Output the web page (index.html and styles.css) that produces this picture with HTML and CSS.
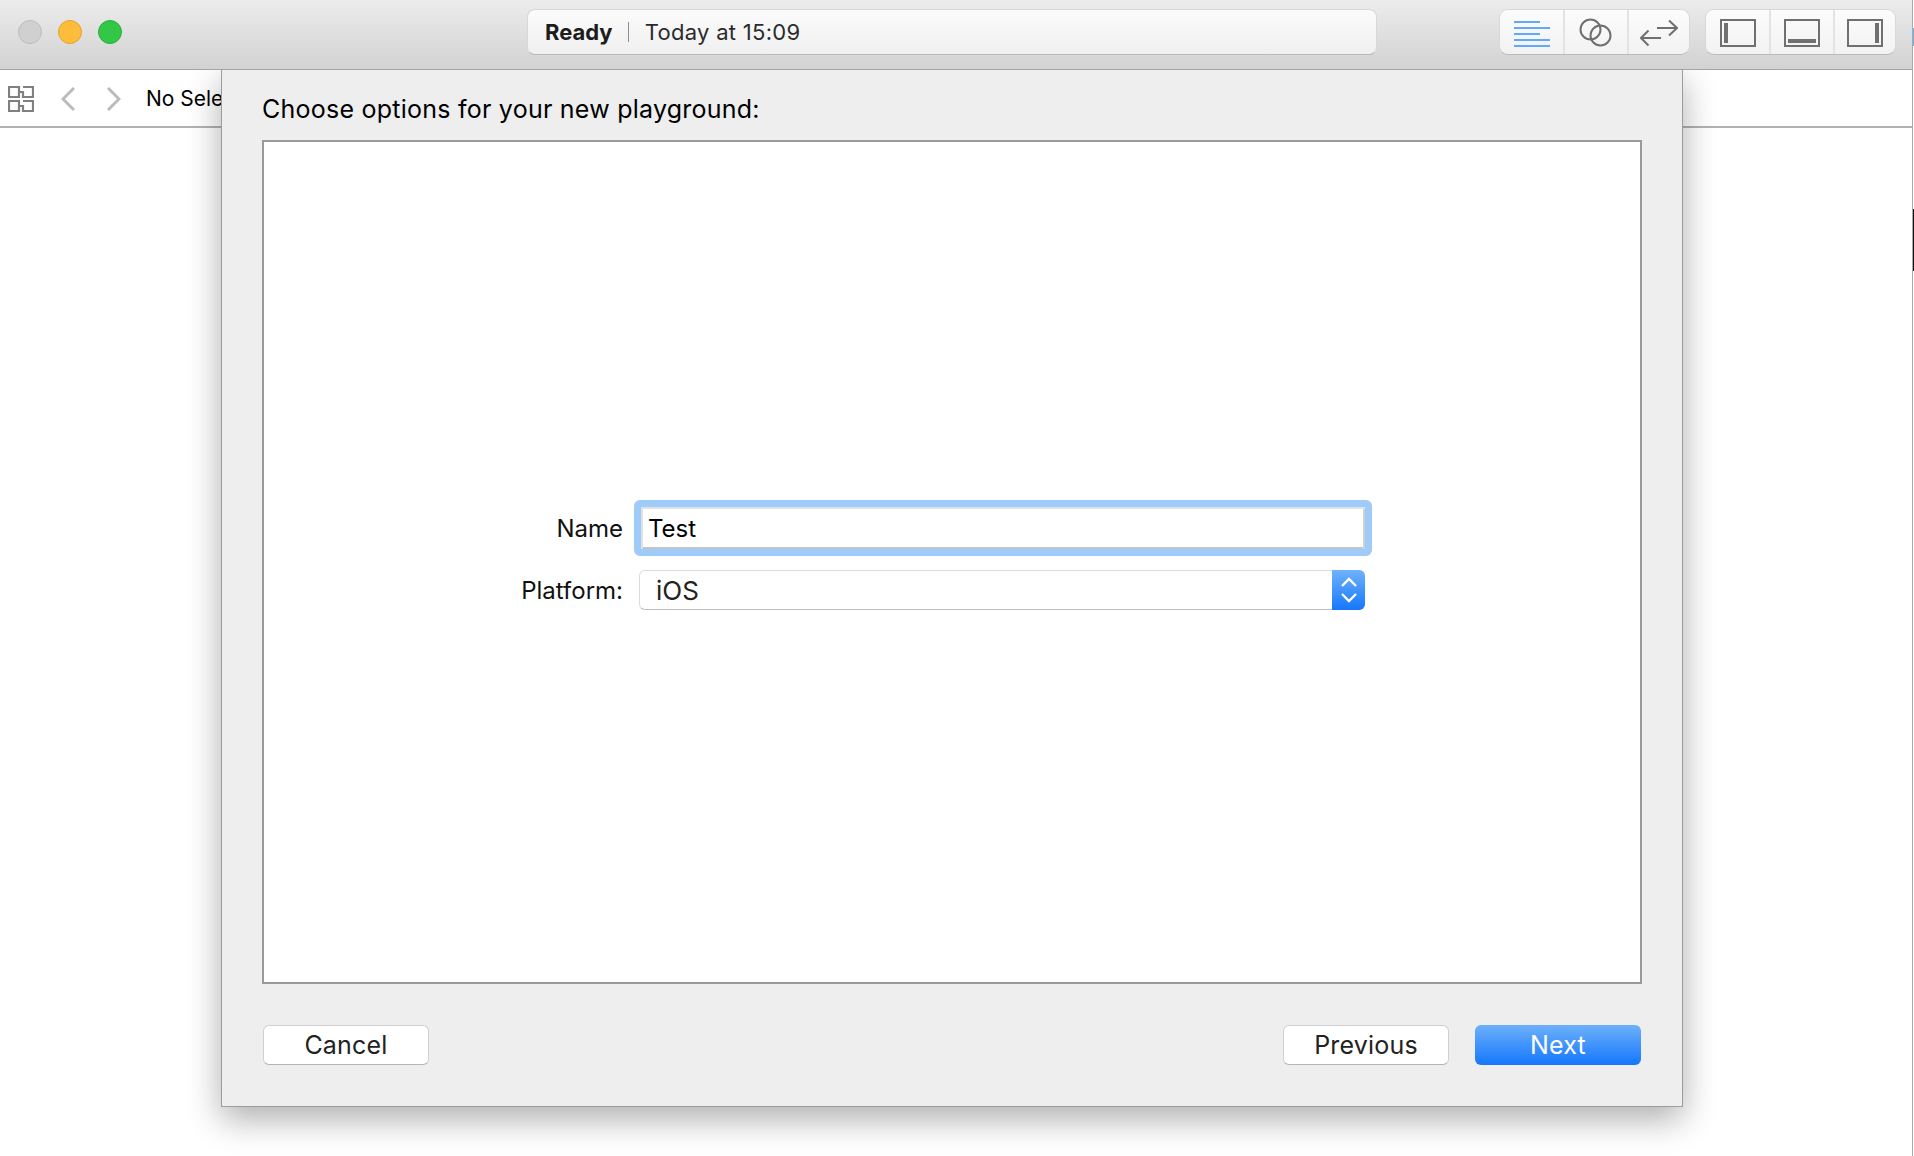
FILE: index.html
```html
<!DOCTYPE html>
<html lang="en">
<head>
<meta charset="utf-8">
<title>Choose options for your new playground</title>
<link rel="stylesheet" href="styles.css">
</head>
<body>
<div class="screen">
  <div class="window">
    <header class="titlebar">
      <div class="lights">
        <span class="light light-off"></span>
        <span class="light light-min"></span>
        <span class="light light-max"></span>
      </div>
      <div class="status">
        <strong class="status-main">Ready</strong>
        <span class="status-sep"></span>
        <span class="status-time">Today at 15:09</span>
      </div>
      <div class="toolgroup">
        <span class="tool">
          <svg width="36" height="28" viewBox="0 -2 36 28" fill="none" stroke="#62a8fb" stroke-width="2"><path d="M0 1H26M0 7H36M0 13H26M0 19H36M0 25H36"/></svg>
        </span>
        <span class="tool">
          <svg width="34" height="30" viewBox="0 0 34 30" fill="none" stroke="#707070" stroke-width="2"><circle cx="11.5" cy="11.5" r="10"/><circle cx="21.5" cy="17.5" r="10"/></svg>
        </span>
        <span class="tool">
          <svg width="38" height="28" viewBox="0 0 38 28" fill="none" stroke="#707070" stroke-width="2"><path d="M17 9H37M29 1.5L37 9L29 16.5M21 19H1M8.5 11.5L1 19L8.5 26.5"/></svg>
        </span>
      </div>
      <div class="toolgroup">
        <span class="tool">
          <svg width="36" height="28" viewBox="0 0 36 28"><rect x="1" y="1" width="34" height="26" fill="none" stroke="#707070" stroke-width="2"/><rect x="4" y="4" width="4" height="20" fill="#707070"/></svg>
        </span>
        <span class="tool">
          <svg width="36" height="28" viewBox="0 0 36 28"><rect x="1" y="1" width="34" height="26" fill="none" stroke="#707070" stroke-width="2"/><rect x="4" y="20" width="28" height="4" fill="#707070"/></svg>
        </span>
        <span class="tool">
          <svg width="36" height="28" viewBox="0 0 36 28"><rect x="1" y="1" width="34" height="26" fill="none" stroke="#707070" stroke-width="2"/><rect x="28" y="4" width="4" height="20" fill="#707070"/></svg>
        </span>
      </div>
    </header>
    <nav class="jumpbar">
      <svg class="grid-icon" width="26" height="26" viewBox="0 0 26 26" fill="none" stroke="#808080" stroke-width="2.2"><path d="M1 1H11V11H1ZM15 1H25V11H15V6H11M1 15H11V25H1ZM15 15H25V25H15V20H11"/></svg>
      <svg class="chevron" width="14" height="24" viewBox="0 0 14 24" fill="none" stroke="#bbbbbb" stroke-width="3"><path d="M13 1L2 12L13 23"/></svg>
      <svg class="chevron" width="14" height="24" viewBox="0 0 14 24" fill="none" stroke="#bbbbbb" stroke-width="3"><path d="M1 1L12 12L1 23"/></svg>
      <span class="crumb">No Selection</span>
    </nav>
    <main class="canvas"></main>

    <section class="dialog">
      <h1 class="dialog-title">Choose options for your new playground:</h1>
      <div class="panel">
        <div class="form">
          <label class="form-label">Name</label>
          <div class="field">Test</div>
          <label class="form-label">Platform:</label>
          <div class="select">
            <span class="select-value">iOS</span>
            <span class="select-arrows">
              <svg width="16" height="28" viewBox="0 0 16 28" fill="none" stroke="#ffffff" stroke-width="2.4"><path d="M1 10L8 3L15 10M1 18L8 25L15 18"/></svg>
            </span>
          </div>
        </div>
      </div>
      <footer class="actions">
        <button class="btn" type="button">Cancel</button>
        <span class="actions-right">
          <button class="btn" type="button">Previous</button>
          <button class="btn btn-primary" type="button">Next</button>
        </span>
      </footer>
    </section>
  </div>
  <aside class="edge">
    <span class="edge-blue"></span>
    <span class="edge-dark"></span>
  </aside>
</div>
</body>
</html>
```
FILE: styles.css
```css
* { box-sizing: border-box; }
html, body { margin: 0; padding: 0; }
body {
  width: 1914px;
  height: 1156px;
  overflow: hidden;
  background: #fff;
  color: #000;
  font-family: Inter, "Liberation Sans", sans-serif;
}
.screen { display: flex; width: 1914px; height: 1156px; }
.window {
  position: relative;
  display: flex;
  flex-direction: column;
  width: 1912px;
  height: 1156px;
  overflow: hidden;
}

/* title bar */
.titlebar {
  position: relative;
  z-index: 2;
  display: flex;
  align-items: flex-start;
  height: 70px;
  padding: 9px 16px 0 16px;
  background: linear-gradient(#ececec, #d2d2d2);
  border-bottom: 1px solid #a4a4a4;
}
.lights { display: flex; gap: 16px; margin: 11px 0 0 2px; width: 509px; }
.light { width: 24px; height: 24px; border-radius: 50%; border: 1px solid; }
.light-off { background: #d0d0d0; border-color: #bcbcbc; }
.light-min { background: #febc3d; border-color: #e5a32e; }
.light-max { background: #33c748; border-color: #2cad3c; }

.status {
  display: flex;
  align-items: center;
  width: 850px;
  height: 46px;
  padding: 0 0 0 17px;
  background: linear-gradient(#fbfbfb, #f0f0f0);
  border: 1px solid #d8d8d8;
  border-bottom-color: #bababa;
  border-radius: 8px;
  font-size: 22px;
}
.status-main { font-weight: 700; color: #1c1c1c; }
.status-sep { width: 1px; height: 20px; margin: 0 16px 0 15px; background: #8e8e8e; }
.status-time { color: #2b2b2b; letter-spacing: 0.3px; }

.toolgroup {
  display: flex;
  height: 46px;
  margin-left: 15px;
  background: linear-gradient(#fcfcfc, #f2f2f2);
  border: 1px solid #d8d8d8;
  border-bottom-color: #bababa;
  border-radius: 9px;
}
.status + .toolgroup { margin-left: 122px; }
.tool {
  display: flex;
  align-items: center;
  justify-content: center;
  width: 65px;
  padding-top: 1px;
  border-right: 2px solid #e3e3e3;
}
.tool:nth-child(2) { width: 64px; }
.tool:last-child { width: 60px; border-right: 0; }

/* jump bar */
.jumpbar {
  display: flex;
  align-items: center;
  height: 58px;
  padding: 1px 0 0 8px;
  background: #fff;
  border-bottom: 2px solid #b2b2b2;
}
.grid-icon { margin-right: 27px; }
.chevron { margin-right: 32px; }
.crumb { margin-left: -7px; font-size: 21px; white-space: nowrap; }
.canvas { flex: 1; background: #fff; }

/* sheet */
.dialog {
  position: absolute;
  z-index: 1;
  left: 221px;
  top: 69px;
  display: flex;
  flex-direction: column;
  width: 1462px;
  height: 1038px;
  padding: 0 40px;
  background: #eeeeee;
  border: 1px solid #9c9c9c;
  border-top: 0;
  box-shadow: 0 12px 32px rgba(0, 0, 0, 0.32);
}
.dialog-title {
  height: 71px;
  margin: 0;
  padding-top: 23px;
  font-size: 25px;
  letter-spacing: 0.24px;
  line-height: 34px;
  font-weight: 400;
  color: #000;
}
.panel {
  flex: 1;
  padding: 358px 0 0 256px;
  background: #fff;
  border: 2px solid #9a9a9a;
}
.form {
  display: grid;
  grid-template-columns: 102px 738px;
  column-gap: 12px;
  row-gap: 14px;
  align-items: center;
}
.form-label {
  margin-right: -1px;
  padding-top: 2px;
  text-align: right;
  font-size: 24px;
  line-height: 30px;
  color: #111;
  white-space: nowrap;
}
.field {
  height: 56px;
  padding-left: 7px;
  border: 7px solid #9ecbfa;
  border-radius: 6px;
  background: #fff;
  box-shadow: inset 0 2px 0 #e2e2e2, inset 2px 0 0 #e2e2e2, inset -2px 0 0 #d0d0d0, inset 0 -2px 0 #c4c4c4;
  font-size: 24px;
  line-height: 44px;
}
.select {
  display: flex;
  align-items: stretch;
  justify-content: space-between;
  height: 40px;
  margin: 0 7px 0 5px;
  background: #fff;
  border: 1px solid #dcdcdc;
  border-bottom-color: #c0c0c0;
  border-radius: 6px;
  font-size: 26px;
}
.select-value { padding-left: 16px; line-height: 40px; color: #222; }
.select-arrows {
  display: flex;
  align-items: center;
  justify-content: center;
  width: 33px;
  margin: -1px -1px -1px 0;
  background: linear-gradient(#6fb2fb, #1677fc);
  border-radius: 0 6px 6px 0;
}

/* footer */
.actions {
  display: flex;
  justify-content: space-between;
  align-items: flex-start;
  height: 122px;
  padding-top: 41px;
  margin: 0 1px;
}
.actions-right { display: flex; gap: 26px; }
.btn {
  width: 166px;
  height: 40px;
  padding: 0;
  background: #fff;
  border: 1px solid #d0d0d0;
  border-bottom-color: #b4b4b4;
  border-radius: 6px;
  color: #222;
  font-family: inherit;
  font-size: 25px;
  letter-spacing: 0.2px;
}
.btn-primary {
  background: linear-gradient(#6cb0fb, #1677fc);
  border: 0;
  color: #fff;
}

/* sliver of the next window */
.edge {
  display: flex;
  flex-direction: column;
  width: 2px;
  height: 1156px;
  border-left: 1px solid #a8a8a8;
  background: #fff;
}
.edge-blue { width: 1px; height: 18px; margin-top: 28px; background: #6fb0e8; }
.edge-dark { width: 1px; height: 62px; margin-top: 163px; background: #111; }
```
